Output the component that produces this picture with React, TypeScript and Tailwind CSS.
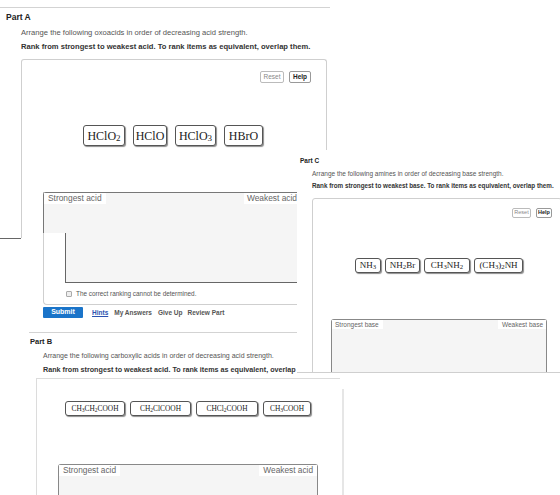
import React from "react";

const serif = "font-['Liberation_Serif','Times_New_Roman',serif]";

function Chip({
  w,
  h,
  size,
  children,
}: {
  w: string;
  h: string;
  size: string;
  children: React.ReactNode;
}) {
  return (
    <div
      className={`${w} ${h} ${size} ${serif} flex items-center justify-center rounded-[3px] border border-[#555] bg-white text-[#222] shadow-[1px_1px_1px_rgba(0,0,0,0.45)] whitespace-nowrap leading-none`}
    >
      {children}
    </div>
  );
}

const S = ({ children }: { children: React.ReactNode }) => <sub>{children}</sub>;

function SmallBtn({ label, bold, cls }: { label: string; bold?: boolean; cls: string }) {
  return (
    <div
      className={`${cls} flex items-center justify-center rounded-[2px] border ${
        bold ? "border-[#999] font-bold text-[#222]" : "border-[#bbb] text-[#888]"
      } bg-white leading-none`}
    >
      {label}
    </div>
  );
}

export default function App() {
  return (
    <div className="relative h-[495px] w-[560px] overflow-hidden bg-white font-['Liberation_Sans',Arial,sans-serif]">
      {/* Part A: question header and drag area */}
      <div className="absolute left-0 top-[7px] w-[330px] border-t border-[#d3d3d3]">
        <div className="pl-[6px] pt-[4px] text-[8.5px] font-bold leading-[11px] text-[#222]">Part A</div>
        <div className="mt-[5px] pl-[21px] text-[7.6px] leading-[10px] text-[#555] whitespace-nowrap">
          Arrange the following oxoacids in order of decreasing acid strength.
        </div>
        <div className="mt-[4px] pl-[21px] text-[7.6px] font-bold leading-[10px] text-[#333] whitespace-nowrap">
          Rank from strongest to weakest acid. To rank items as equivalent, overlap them.
        </div>
        <div className="ml-[21px] mt-[7px] h-[179px] w-[306px] rounded-t-[3px] border-x border-t border-[#cfcfcf]">
          <div className="flex justify-end gap-[5px] pr-[15px] pt-[11px] text-[6.5px]">
            <SmallBtn label="Reset" cls="h-[12px] w-[24px]" />
            <SmallBtn label="Help" bold cls="h-[12px] w-[22px]" />
          </div>
          <div className="mt-[42px] flex gap-[8px] pl-[61px]">
            <Chip w="w-[42px]" h="h-[21px]" size="text-[12px]">
              HClO<S>2</S>
            </Chip>
            <Chip w="w-[34px]" h="h-[21px]" size="text-[12px]">
              HClO
            </Chip>
            <Chip w="w-[41px]" h="h-[21px]" size="text-[12px]">
              HClO<S>3</S>
            </Chip>
            <Chip w="w-[39px]" h="h-[21px]" size="text-[12px]">
              HBrO
            </Chip>
          </div>
        </div>
      </div>
      <div className="absolute left-0 top-[238px] h-px w-[21px] bg-[#666]" />

      {/* Part A: ranking target, actions, Part B intro */}
      <div className="absolute left-0 top-[192px] w-[297px] overflow-hidden">
        <div className="ml-[43px] h-[113px] w-[262px] rounded-bl-[4px] border-b border-l border-[#cfcfcf]">
          <div className="-ml-px flex h-[41px] items-start justify-between rounded-tl-[3px] border-l border-t border-[#777] bg-[#f5f5f5] text-[8.4px] leading-[11px] text-[#666]">
            <span className="bg-white pl-[4px] pr-[4px]">Strongest acid</span>
            <span className="bg-white pl-[3px] pr-[8px]">Weakest acid</span>
          </div>
          <div className="flex h-[50px]">
            <div className="w-[21px]" />
            <div className="flex-1 border-b border-l border-[#666] bg-[#f5f5f5]" />
          </div>
          <div className="flex h-[21px] items-center gap-[4px] pl-[22px]">
            <div className="h-[6px] w-[6px] rounded-[1px] border border-[#aaa] bg-[#eee]" />
            <span className="text-[6.4px] text-[#555] whitespace-nowrap">
              The correct ranking cannot be determined.
            </span>
          </div>
        </div>
        <div className="ml-[43px] mt-[2px] flex h-[11px] items-center whitespace-nowrap text-[6.5px] font-bold">
          <div className="flex h-[11px] w-[40px] items-center justify-center rounded-[1px] bg-[#1a74c9] text-[7px] text-white">
            Submit
          </div>
          <span className="ml-[9px] text-[#2a52b0] underline">Hints</span>
          <span className="ml-[6px] text-[#555]">My Answers</span>
          <span className="ml-[6px] text-[#555]">Give Up</span>
          <span className="ml-[5px] text-[#555]">Review Part</span>
        </div>
        <div className="ml-[29px] mt-[14px] border-t border-[#d3d3d3]">
          <div className="pl-px pt-[4px] text-[7.5px] font-bold leading-[10px] text-[#222]">Part B</div>
          <div className="mt-[4px] pl-[14px] text-[7px] leading-[10px] text-[#555] whitespace-nowrap">
            Arrange the following carboxylic acids in order of decreasing acid strength.
          </div>
          <div className="mt-[4px] pl-[14px] text-[7.2px] font-bold leading-[10px] text-[#333] whitespace-nowrap">
            Rank from strongest to weakest acid. To rank items as equivalent, overlap them.
          </div>
        </div>
      </div>

      {/* Part C window */}
      <div className="absolute left-[297px] top-[150px] h-[223px] w-[263px] overflow-hidden border-b border-[#cfcfcf] bg-white">
        <div className="pl-[3px] pt-[6px] text-[6.5px] font-bold leading-[9px] text-[#222]">Part C</div>
        <div className="mt-[4px] pl-[15px] text-[6.5px] leading-[9px] text-[#555] whitespace-nowrap">
          Arrange the following amines in order of decreasing base strength.
        </div>
        <div className="mt-[3px] pl-[15px] text-[6.3px] font-bold leading-[9px] text-[#333] whitespace-nowrap">
          Rank from strongest to weakest base. To rank items as equivalent, overlap them.
        </div>
        <div className="ml-[15px] mt-[8px] h-[200px] w-[250px] rounded-[3px] border border-[#cfcfcf]">
          <div className="flex justify-end gap-[5px] pr-[9px] pt-[9px] text-[5.5px]">
            <SmallBtn label="Reset" cls="h-[10px] w-[19px]" />
            <SmallBtn label="Help" bold cls="h-[10px] w-[16px]" />
          </div>
          <div className="mt-[40px] flex gap-[4px] pl-[42px]">
            <Chip w="w-[26px]" h="h-[15px]" size="text-[9px]">
              NH<S>3</S>
            </Chip>
            <Chip w="w-[35px]" h="h-[15px]" size="text-[9px]">
              NH<S>2</S>Br
            </Chip>
            <Chip w="w-[46px]" h="h-[15px]" size="text-[9px]">
              CH<S>3</S>NH<S>2</S>
            </Chip>
            <Chip w="w-[49px]" h="h-[15px]" size="text-[9px]">
              (CH<S>3</S>)<S>2</S>NH
            </Chip>
          </div>
          <div className="ml-[18px] mt-[46px] flex h-[60px] w-[216px] items-start justify-between rounded-t-[3px] border-x border-t border-[#888] bg-[#f5f5f5] text-[6.5px] leading-[9px] text-[#666]">
            <span className="bg-white pl-[3px] pr-[4px]">Strongest base</span>
            <span className="bg-white pl-[4px] pr-[3px]">Weakest base</span>
          </div>
        </div>
      </div>

      {/* Part B window */}
      <div className="absolute left-0 top-[376px] h-[119px] w-[560px] bg-white">
        <div className="absolute left-[342px] top-[13px] h-[106px] w-[2px] bg-[#e6e6e6]" />
        <div className="ml-[36px] mt-[2px] h-[117px] w-[304px] border-l border-t border-[#dcdcdc]">
          <div className="ml-[28px] mt-[22px] flex gap-[5px]">
            <Chip w="w-[60px]" h="h-[15px]" size="text-[7.4px]">
              CH<S>3</S>CH<S>2</S>COOH
            </Chip>
            <Chip w="w-[61px]" h="h-[15px]" size="text-[7.4px]">
              CH<S>2</S>ClCOOH
            </Chip>
            <Chip w="w-[62px]" h="h-[15px]" size="text-[7.4px]">
              CHCl<S>2</S>COOH
            </Chip>
            <Chip w="w-[48px]" h="h-[15px]" size="text-[7.4px]">
              CH<S>3</S>COOH
            </Chip>
          </div>
          <div className="ml-[21px] mt-[48px] flex h-[40px] w-[260px] items-start justify-between rounded-t-[3px] border-x border-t border-[#888] bg-[#f5f5f5] text-[8.3px] leading-[11px] text-[#666]">
            <span className="bg-white pl-[4px] pr-[4px]">Strongest acid</span>
            <span className="bg-white pl-[4px] pr-[4px]">Weakest acid</span>
          </div>
        </div>
      </div>
    </div>
  );
}
